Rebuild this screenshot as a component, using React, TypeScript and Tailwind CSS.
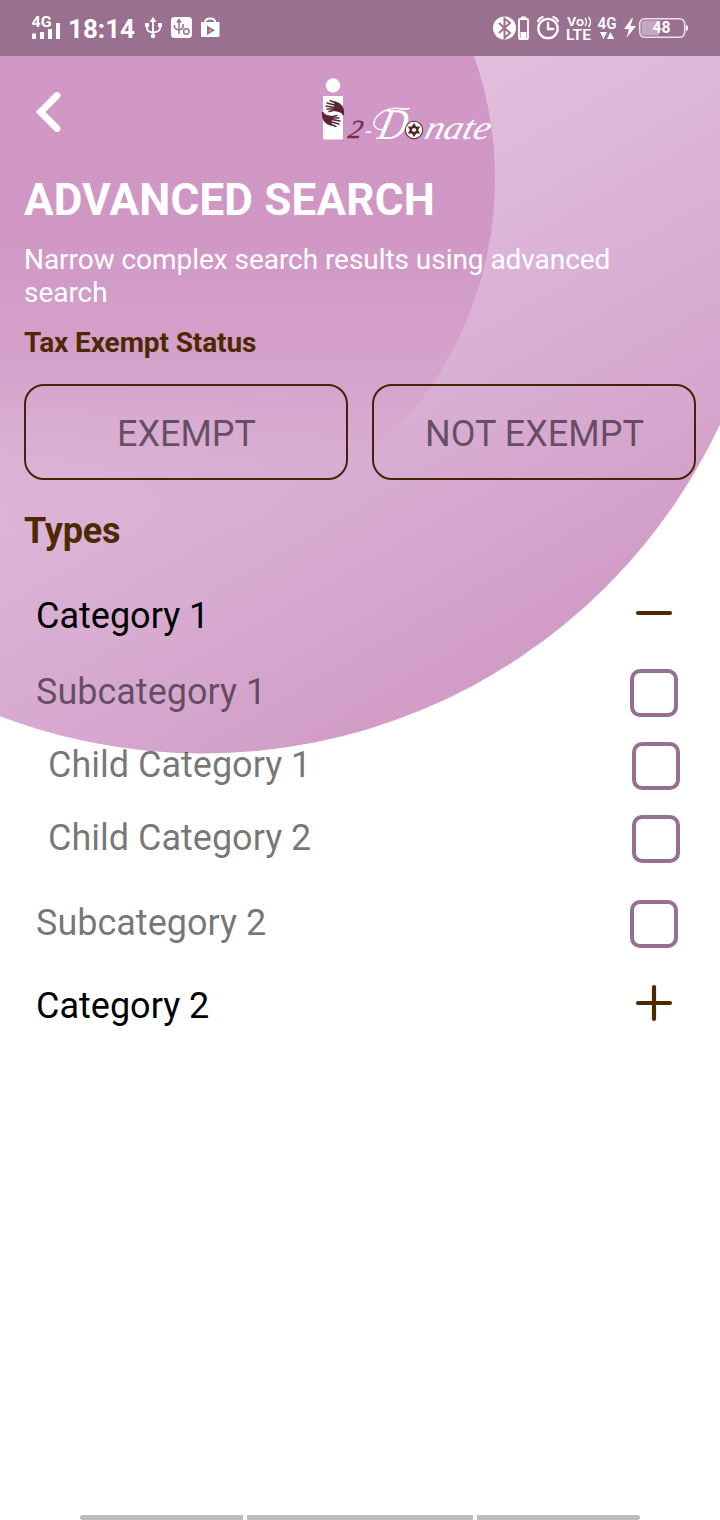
import React from 'react';

function StatusBar() {
  return (
    <header className="relative flex h-14 shrink-0 items-center justify-between bg-[#99708f] pl-8 pr-8 text-white">
      <svg className="h-14 w-[200px]" viewBox="32 0 200 56" fill="white">
        <text x="31.5" y="27" fontSize="15.5" fontWeight="700" textLength="20" lengthAdjust="spacingAndGlyphs">4G</text>
        <rect x="32" y="33.5" width="4" height="5.5" />
        <rect x="40" y="32" width="4" height="7" />
        <rect x="48" y="29" width="4" height="10" />
        <rect x="56" y="23" width="4" height="16" />
        <text x="68" y="38" fontSize="26" fontWeight="700" textLength="67" lengthAdjust="spacing">18:14</text>
        <path d="M153 20v15M147 25v3q0 4 6 4.500M160 25v3q0 4-7 4.500" fill="none" stroke="white" strokeWidth="1.800" />
        <path d="M153 17l3.500 5h-7zM145 23h4v4h-4zM158 23h4v4h-4z" />
        <circle cx="153" cy="36" r="2.300" />
        <rect x="171" y="17" width="21" height="21" rx="3.500" />
        <g fill="none" stroke="#99708f" strokeWidth="1.500">
          <path d="M179 21v13M174.500 25v2q0 2 4.500 3M183 24v3q0 2-4 3M177 22.500l2-3 2 3" />
          <circle cx="186.300" cy="31.500" r="2.700" />
        </g>
        <path d="M201 22h18.500v13.500q0 1.500-1.500 1.500h-15.500q-1.500 0-1.500-1.500z" />
        <path d="M205 23q0-4.500 5.200-4.500t5.200 4.500" fill="none" stroke="white" strokeWidth="1.800" />
        <path d="M207 25.500l8 4.700-8 4.700z" fill="#99708f" />
        <path d="M209 28.500l3.500 2.200-3.500 2z" fill="#c98b98" />
      </svg>
      <svg className="h-14 w-[196px]" viewBox="492 0 196 56" fill="white">
        <circle cx="504.500" cy="28" r="11.500" />
        <path d="M499 23l11 10-5.500 5V18.500l5.500 4.500-11 10" fill="none" stroke="#99708f" strokeWidth="2" />
        <path d="M521 16.500h5v2h-5z" />
        <rect x="519" y="19" width="9" height="20" rx="1" fill="none" stroke="white" strokeWidth="1.800" />
        <rect x="520.500" y="32" width="6" height="6" />
        <g fill="none" stroke="white" strokeWidth="2.300" strokeLinecap="round">
          <circle cx="548" cy="28.500" r="9.700" />
          <path d="M548 23v6h5.500M538 21q1.500-3 4.500-4M558 21q-1.500-3-4.500-4" />
        </g>
        <text x="567" y="25.500" fontSize="12.500" fontWeight="600" textLength="17" lengthAdjust="spacingAndGlyphs">Vo</text>
        <path d="M585 18q3 4 0 8M588.500 17q4 5 0 10" fill="none" stroke="white" strokeWidth="1.400" />
        <text x="566" y="40" fontSize="14.500" fontWeight="600" textLength="25" lengthAdjust="spacingAndGlyphs">LTE</text>
        <text x="597.500" y="29" fontSize="17" fontWeight="600" textLength="19" lengthAdjust="spacingAndGlyphs">4G</text>
        <path d="M600 32h7l-3.500 7zM607 39h7l-3.500-7z" />
        <path d="M632 18l-8 11h5l-2.500 9 9.500-12h-5.500l2.500-8z" />
        <rect x="639.700" y="18.700" width="45" height="18.600" rx="5" fill="none" stroke="#ecdfe9" strokeWidth="1.600" />
        <path d="M645 20.500h14v15h-14q-3.500 0-3.500-3.500v-8q0-3.500 3.500-3.500z" fill="#c4a8bf" />
        <text x="652.500" y="33.300" fontSize="16" fontWeight="700" textLength="18" lengthAdjust="spacingAndGlyphs">48</text>
        <path d="M686 25q2 0 2 3t-2 3z" />
      </svg>
    </header>
  );
}

function Backdrop() {
  return (
    <svg className="absolute left-0 top-0 h-[1520px] w-[720px]" viewBox="0 0 720 1520">
      <defs>
        <linearGradient id="outer" gradientUnits="userSpaceOnUse" x1="325" y1="130" x2="590" y2="590">
          <stop offset="0" stopColor="#e1c0dd" />
          <stop offset="0.450" stopColor="#dbb1d5" />
          <stop offset="0.800" stopColor="#d6a6ce" />
          <stop offset="1" stopColor="#d19dc7" />
        </linearGradient>
        <linearGradient id="inner" gradientUnits="userSpaceOnUse" x1="0" y1="56" x2="0" y2="548">
          <stop offset="0" stopColor="#d198c7" />
          <stop offset="0.350" stopColor="#d097c5" />
          <stop offset="0.650" stopColor="#d5a3cc" />
          <stop offset="1" stopColor="#dcb2d6" stopOpacity="0" />
        </linearGradient>
      </defs>
      <circle cx="203" cy="183" r="570.500" fill="url(#outer)" />
      <circle cx="126" cy="178.500" r="369" fill="url(#inner)" />
    </svg>
  );
}

function Logo() {
  return (
    <svg className="h-[76px] w-[180px]" viewBox="315 72 180 76">
      <circle cx="333" cy="85.500" r="7.200" fill="white" />
      <rect x="323" y="96" width="20" height="43.500" rx="1" fill="white" />
      <g stroke="#5c2530" fill="none" strokeWidth="1.400" strokeLinecap="round">
        <g id="hand">
          <path d="M330 100.500l8 3.500M327 103l11 3M326 106l11 2M327 109l9 0M329 111.500l6-1.500" />
          <path d="M335 102q9 2 8.500 13q-1.500-4-8.500-4.500z" fill="#5c2530" />
        </g>
        <use href="#hand" transform="rotate(180 333 113.500)" />
      </g>
      <g fontFamily="'Liberation Serif', serif" fontStyle="italic">
        <text transform="translate(347 138) skewX(-12)" fontSize="26" fill="#762c50" stroke="#762c50" strokeWidth="0.400" textLength="14" lengthAdjust="spacingAndGlyphs">2</text>
        <text x="365" y="137" fontSize="20" fill="white">-</text>
        <text transform="translate(376 139) skewX(-14)" fontSize="44" fill="white" textLength="28" lengthAdjust="spacingAndGlyphs">D</text>
        <text transform="translate(423 139) skewX(-16)" fontSize="34" fill="white" textLength="65" lengthAdjust="spacingAndGlyphs">nate</text>
      </g>
      <path d="M384 129.500c-8 1-12-4-9-10c4-8 15-12 24-11q5 1 10 0" fill="none" stroke="white" strokeWidth="1.500" strokeLinecap="round" />
      <circle cx="414" cy="130" r="8.700" fill="white" stroke="#5c3030" strokeWidth="1.100" />
      <path d="M414 124.500l4.700 8.200h-9.400zM414 135.500l4.700-8.200h-9.400z" fill="none" stroke="#54271f" strokeWidth="1.700" />
    </svg>
  );
}

function StatusButton({ label }: { label: string }) {
  return (
    <button className="flex h-24 flex-1 items-center justify-center rounded-[20px] border-2 border-[#4b2203] pl-px pt-1 text-4xl text-black/55">
      {label}
    </button>
  );
}

function ToggleIcon({ open }: { open: boolean }) {
  return (
    <svg className="h-10 w-10" viewBox="0 0 40 40" stroke="#4e2800" strokeWidth="4.200" strokeLinecap="round">
      <path d="M4 20h32" />
      {!open && <path d="M20 4v32" />}
    </svg>
  );
}

function CategoryRow({ label, open, className }: { label: string; open: boolean; className: string }) {
  return (
    <div className={`flex justify-between pl-9 pr-[46px] text-black ${className}`}>
      <span className="mt-[3px]">{label}</span>
      <ToggleIcon open={open} />
    </div>
  );
}

function CheckRow({ label, className }: { label: string; className: string }) {
  return (
    <div className={`flex h-12 items-center justify-between text-black/55 ${className}`}>
      <span className="-mt-[3px]">{label}</span>
      <span className="h-12 w-12 rounded-[10px] border-4 border-[#957090]" />
    </div>
  );
}

function NavigationHandle() {
  return (
    <nav className="mx-20 mb-0 mt-auto flex h-[5px] gap-1">
      <span className="w-[163px] rounded-l-full bg-[#bdbdbd]" />
      <span className="w-[226px] bg-[#bdbdbd]" />
      <span className="w-[163px] rounded-r-full bg-[#bdbdbd]" />
    </nav>
  );
}

export default function App() {
  return (
    <div className="relative h-[1520px] w-[720px] overflow-hidden bg-white font-['Roboto',sans-serif]">
      <Backdrop />
      <div className="relative flex h-full flex-col">
        <StatusBar />
        <div className="flex h-[112px] shrink-0 items-start pt-4">
          <svg className="ml-9 mt-[18px] h-11 w-7" viewBox="36 90 28 44">
            <path d="M57 95.500L40.500 112l16.500 16.500" fill="none" stroke="white" strokeWidth="6.800" strokeLinecap="round" strokeLinejoin="miter" />
          </svg>
          <div className="ml-[251px]">
            <Logo />
          </div>
        </div>
        <main className="flex flex-col">
          <h1 className="h-[75px] pl-6 pt-[6px] text-[44px] font-bold leading-[52px] tracking-[0.2px] text-white">ADVANCED SEARCH</h1>
          <p className="h-[83px] px-6 text-[28px] leading-[33px] tracking-[-0.05px] text-white">Narrow complex search results using advanced search</p>
          <h2 className="h-[58px] pl-6 text-[28px] font-bold leading-[33px] tracking-[-0.1px] text-[#4e2800]">Tax Exempt Status</h2>
          <div className="flex gap-6 px-6">
            <StatusButton label="EXEMPT" />
            <StatusButton label="NOT EXEMPT" />
          </div>
          <h2 className="mt-[29px] pl-6 text-4xl font-bold leading-[44px] tracking-[-0.2px] text-[#4e2800]">Types</h2>
          <section className="flex flex-col text-4xl">
            <CategoryRow label="Category 1" open className="mt-10 h-[46px]" />
            <CheckRow label="Subcategory 1" className="mt-[30px] pl-9 pr-[42px]" />
            <CheckRow label="Child Category 1" className="mt-[25px] pl-12 pr-10" />
            <CheckRow label="Child Category 2" className="mt-[25px] pl-12 pr-10" />
            <CheckRow label="Subcategory 2" className="mt-[37px] pl-9 pr-[42px]" />
            <CategoryRow label="Category 2" open={false} className="mt-[35px] h-[46px]" />
          </section>
        </main>
        <NavigationHandle />
      </div>
    </div>
  );
}
